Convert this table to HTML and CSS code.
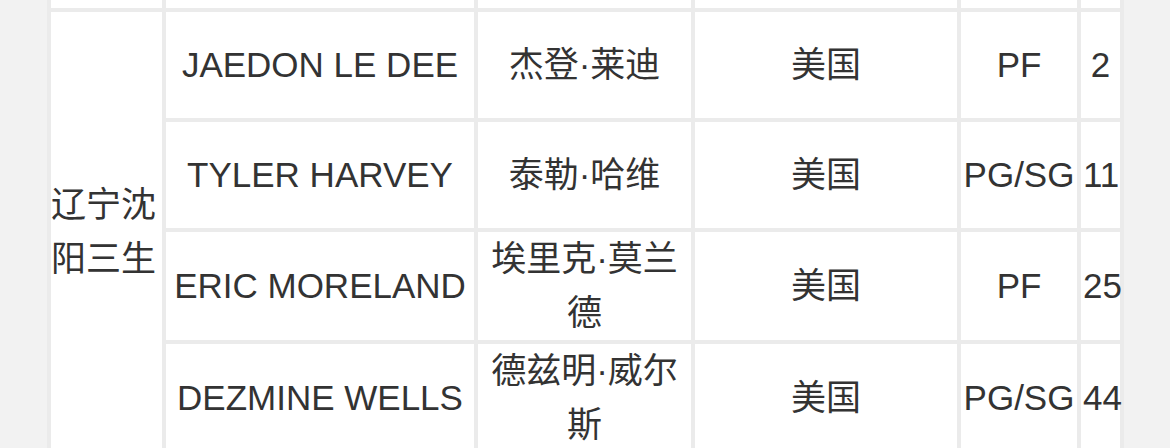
FILE: index.html
```html
<!DOCTYPE html>
<html lang="zh">
<head>
<meta charset="utf-8">
<title>球员名单</title>
<link rel="stylesheet" href="styles.css">
</head>
<body>
<div class="page">
  <table class="roster">
    <colgroup>
      <col class="c-team">
      <col class="c-name">
      <col class="c-cn">
      <col class="c-country">
      <col class="c-pos">
      <col class="c-num">
    </colgroup>
    <tbody>
      <tr class="prev">
        <td></td><td></td><td></td><td></td><td></td><td></td>
      </tr>
      <tr>
        <td class="team" rowspan="4">辽宁沈阳三生</td>
        <td>JAEDON LE DEE</td>
        <td>杰登·莱迪</td>
        <td>美国</td>
        <td>PF</td>
        <td>2</td>
      </tr>
      <tr>
        <td>TYLER HARVEY</td>
        <td>泰勒·哈维</td>
        <td>美国</td>
        <td>PG/SG</td>
        <td>11</td>
      </tr>
      <tr>
        <td>ERIC MORELAND</td>
        <td>埃里克·莫兰德</td>
        <td>美国</td>
        <td>PF</td>
        <td>25</td>
      </tr>
      <tr>
        <td>DEZMINE WELLS</td>
        <td>德兹明·威尔斯</td>
        <td>美国</td>
        <td>PG/SG</td>
        <td>44</td>
      </tr>
    </tbody>
  </table>
</div>
</body>
</html>
```

FILE: styles.css
```css
html, body {
  margin: 0;
  padding: 0;
  background: #f2f2f2;
}

.page {
  padding-left: 47px;
  height: 448px;
  overflow: hidden;
}

.roster {
  border-collapse: collapse;
  table-layout: fixed;
  width: 1073px;
  background: #ffffff;
  font-family: "Liberation Sans", "Noto Sans CJK SC", sans-serif;
  font-size: 35px;
  line-height: 54px;
  color: #333333;
}

.c-team { width: 115px; }
.c-name { width: 312px; }
.c-cn { width: 217px; }
.c-country { width: 266px; }
.c-pos { width: 120px; }
.c-num { width: 43px; }

.roster td {
  border: 4px solid #ebebeb;
  padding: 0 2px;
  height: 110px;
  text-align: center;
  vertical-align: middle;
  box-sizing: border-box;
}

.roster .prev td {
  height: 10px;
  border-top: hidden;
}

.roster td.team {
  padding: 0;
  text-align: left;
}
```
